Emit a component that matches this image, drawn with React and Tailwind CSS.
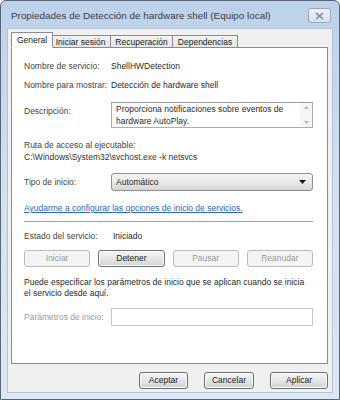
import React from "react";

const font = { fontFamily: '"Segoe UI", "Liberation Sans", Arial, sans-serif' };

function Btn({ children, disabled, w, className = "" }) {
  return (
    <div
      className={
        "flex h-[17px] items-center justify-center rounded-[3px] border text-[8.5px] leading-none " +
        (disabled
          ? "border-[#b8bcc0] bg-[#f4f4f4] text-[#9a9a9a] "
          : "border-[#707070] bg-gradient-to-b from-[#f4f4f4] via-[#e6e6e6] to-[#d2d2d2] text-[#222] shadow-[inset_0_0_0_1px_#fbfbfb] ") +
        className
      }
      style={w ? { width: w } : undefined}
    >
      {children}
    </div>
  );
}

function Tab({ children, active }) {
  return (
    <div
      className={
        "flex items-center whitespace-nowrap border border-[#898c95] text-[8.5px] leading-none text-[#222] " +
        (active
          ? "relative z-10 -mr-[2px] h-[16px] border-b-white bg-white px-[5px]"
          : "-ml-[1px] h-[13px] border-b-0 bg-gradient-to-b from-[#f3f3f3] to-[#e3e3e3] px-[4.5px]")
      }
    >
      {children}
    </div>
  );
}

export default function App() {
  return (
    <div
      className="flex h-[400px] w-[340px] flex-col overflow-hidden rounded-t-[6px] border border-[#5a6675] bg-gradient-to-b from-[#bcd1ea] via-[#d3e1f2] to-[#dce7f4] text-[#2a2a2a]"
      style={font}
    >
      {/* Title bar */}
      <div className="flex h-[27px] shrink-0 items-center justify-between pl-[10px] pr-[8px]">
        <span className="mt-[3px] whitespace-nowrap text-[9.9px] text-[#3a3f46]">
          Propiedades de Detección de hardware shell (Equipo local)
        </span>
        <div className="mt-[2px] flex h-[15px] w-[23px] items-center justify-center rounded-[3px] border border-[#9aa7b7] bg-gradient-to-b from-[#eef3f9] to-[#d5e1ef]">
          <svg width="9" height="8" viewBox="0 0 9 8">
            <path d="M1 1 L8 7 M8 1 L1 7" stroke="#7a8594" strokeWidth="1.5" fill="none" />
          </svg>
        </div>
      </div>

      {/* Client area */}
      <div className="mx-[6px] mb-[6px] flex flex-1 flex-col border border-[#b3c3d6] bg-[#f0f0f0] pl-[3px] pr-[4px] pt-[3px]">
        {/* Tabs */}
        <div className="flex items-end">
          <Tab active>General</Tab>
          <Tab>Iniciar sesión</Tab>
          <Tab>Recuperación</Tab>
          <Tab>Dependencias</Tab>
        </div>

        {/* Panel */}
        <div className="-mt-[1px] flex h-[317px] flex-col border border-[#898c95] bg-white pl-[12px] pr-[14px] pt-[12px] text-[8.5px] leading-[12px]">
          <div className="flex whitespace-nowrap">
            <span className="w-[87px] text-[#444]">Nombre de servicio:</span>
            <span>ShellHWDetection</span>
          </div>
          <div className="mt-[7px] flex whitespace-nowrap">
            <span className="w-[87px] text-[#444]">Nombre para mostrar:</span>
            <span>Detección de hardware shell</span>
          </div>
          <div className="mt-[11px] flex">
            <span className="mt-[3px] w-[87px] whitespace-nowrap text-[#444]">Descripción:</span>
            <div className="flex h-[26px] flex-1 border border-[#abadb3] border-t-[#9a9da5] bg-white">
              <div className="flex-1 px-[4px] leading-[12px]">
                Proporciona notificaciones sobre eventos de hardware AutoPlay.
              </div>
              <div className="flex w-[12px] flex-col items-center justify-between bg-[#f6f6f6] py-[3px]">
                <svg width="5" height="3" viewBox="0 0 5 3"><path d="M0 3 L2.5 0 L5 3Z" fill="#b8b8b8" /></svg>
                <svg width="5" height="3" viewBox="0 0 5 3"><path d="M0 0 L2.5 3 L5 0Z" fill="#b8b8b8" /></svg>
              </div>
            </div>
          </div>
          <div className="mt-[11px] text-[#444]">Ruta de acceso al ejecutable:</div>
          <div className="text-[#333]">C:\Windows\System32\svchost.exe -k netsvcs</div>
          <div className="mt-[10px] flex items-center">
            <span className="w-[87px] whitespace-nowrap text-[#444]">Tipo de inicio:</span>
            <div className="flex h-[18px] flex-1 items-center justify-between rounded-[3px] border border-[#8e8f8f] bg-gradient-to-b from-[#f4f4f4] via-[#e9e9e9] to-[#d6d6d6] pl-[4px] pr-[6px]">
              <span>Automático</span>
              <svg width="7" height="4" viewBox="0 0 7 4"><path d="M0 0 L7 0 L3.5 4Z" fill="#1a1a1a" /></svg>
            </div>
          </div>
          <div className="mt-[11px] whitespace-nowrap text-[#2a66c4] underline decoration-[#2a66c4]">
            Ayudarme a configurar las opciones de inicio de servicios.
          </div>
          <div className="mt-[7px] h-[1px] bg-[#a0a0a0]" />
          <div className="mt-[8px] flex whitespace-nowrap">
            <span className="w-[89px] text-[#444]">Estado del servicio:</span>
            <span>Iniciado</span>
          </div>
          <div className="mt-[8px] grid grid-cols-4 gap-[8px]">
            <Btn disabled>Iniciar</Btn>
            <Btn className="border-[#3c3c3c]">Detener</Btn>
            <Btn disabled>Pausar</Btn>
            <Btn disabled>Reanudar</Btn>
          </div>
          <div className="mt-[10px] leading-[11px]">
            Puede especificar los parámetros de inicio que se aplican cuando se inicia el servicio desde aquí.
          </div>
          <div className="mt-[9px] flex items-center">
            <span className="w-[87px] whitespace-nowrap text-[#9a9a9a]">Parámetros de inicio:</span>
            <div className="h-[18px] flex-1 border border-[#c5c7cc] bg-white" />
          </div>
        </div>

        {/* Bottom buttons */}
        <div className="mt-[8px] flex justify-end gap-[16px]">
          <Btn w="49px">Aceptar</Btn>
          <Btn w="50px">Cancelar</Btn>
          <Btn w="58px">Aplicar</Btn>
        </div>
      </div>
    </div>
  );
}
